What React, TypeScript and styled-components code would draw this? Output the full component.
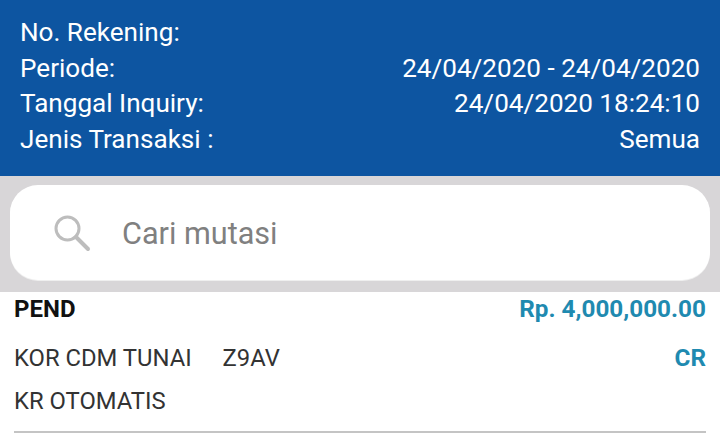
import styled, { createGlobalStyle } from 'styled-components';

const Global = createGlobalStyle`
  html, body {
    margin: 0;
    padding: 0;
    background: #ffffff;
  }
  body {
    font-family: Roboto, "Liberation Sans", sans-serif;
  }
`;

export default function App() {
  return (
    <>
      <Global />
      <Page>
        <Header>
          <InfoRow>
            <span>No. Rekening:</span>
          </InfoRow>
          <InfoRow>
            <span>Periode:</span>
            <span>24/04/2020 - 24/04/2020</span>
          </InfoRow>
          <InfoRow>
            <span>Tanggal Inquiry:</span>
            <span>24/04/2020 18:24:10</span>
          </InfoRow>
          <InfoRow>
            <span>Jenis Transaksi :</span>
            <span>Semua</span>
          </InfoRow>
        </Header>
        <SearchBand>
          <SearchBox>
            <svg width="38" height="38" viewBox="0 0 38 38" fill="none" stroke="#bdbdbd">
              <circle cx="14.5" cy="14.5" r="11.5" strokeWidth="3" />
              <path d="M23 23 L35 35" strokeWidth="4" strokeLinecap="round" />
            </svg>
            <SearchText>Cari mutasi</SearchText>
          </SearchBox>
        </SearchBand>
        <Transaction>
          <TxRow $height={49}>
            <Code>PEND</Code>
            <Amount>Rp. 4,000,000.00</Amount>
          </TxRow>
          <TxRow $height={43}>
            <Desc>
              KOR CDM TUNAI <Ref>Z9AV</Ref>
            </Desc>
            <Amount>CR</Amount>
          </TxRow>
          <TxRow $height={43}>
            <Desc>KR OTOMATIS</Desc>
          </TxRow>
        </Transaction>
      </Page>
    </>
  );
}

const Page = styled.div`
  width: 720px;
  height: 442px;
  overflow: hidden;
  background: #ffffff;
`;

const Header = styled.div`
  height: 176px;
  box-sizing: border-box;
  padding: 15px 20px 0 20px;
  background: #0d55a1;
  color: #ffffff;
`;

const InfoRow = styled.div`
  display: flex;
  justify-content: space-between;
  height: 35.5px;
  line-height: 35.5px;
  font-size: 26.1px;
`;

const SearchBand = styled.div`
  height: 116px;
  box-sizing: border-box;
  padding: 9px 10px 0 10px;
  background: #d8d6d8;
`;

const SearchBox = styled.div`
  display: flex;
  align-items: center;
  height: 95px;
  box-sizing: border-box;
  padding-left: 43px;
  gap: 31px;
  background: #ffffff;
  border-radius: 28px;
  box-shadow: 0 1px 0 #efefef;
`;

const SearchText = styled.span`
  font-size: 30.6px;
  color: #808080;
  padding-top: 1px;
`;

const Transaction = styled.div`
  height: 141px;
  box-sizing: border-box;
  margin: 0 14px;
  border-bottom: 2px solid #c4c4c4;
`;

const TxRow = styled.div<{ $height: number }>`
  display: flex;
  justify-content: space-between;
  height: ${(p) => p.$height}px;
  line-height: 34px;
`;

const Code = styled.span`
  font-size: 24px;
  font-weight: 700;
  color: #111111;
`;

const Amount = styled.span`
  font-size: 24.3px;
  font-weight: 700;
  color: #1f8ab0;
`;

const Desc = styled.span`
  font-size: 23.8px;
  color: #333333;
`;

const Ref = styled.span`
  margin-left: 25px;
`;
